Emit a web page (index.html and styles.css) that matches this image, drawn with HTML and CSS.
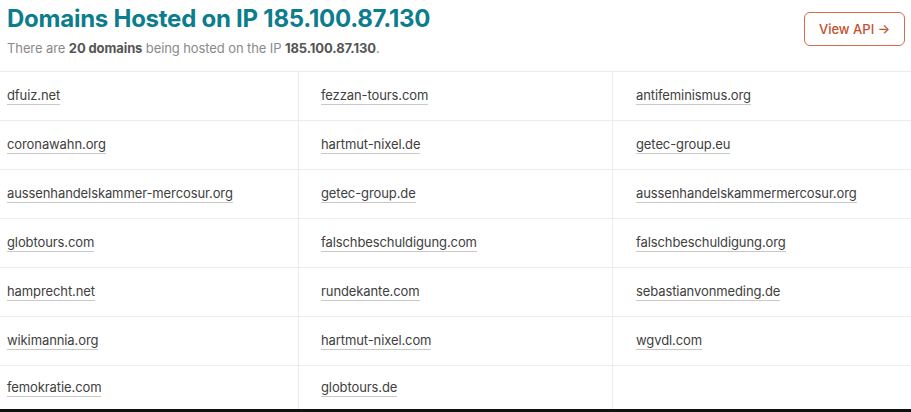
FILE: index.html
```html
<!DOCTYPE html>
<html>
<head>
<meta charset="utf-8">
<link rel="stylesheet" href="styles.css">
</head>
<body>
<div class="page">
  <header class="head">
    <div class="titles">
      <h1 class="title">Domains Hosted on IP 185.100.87.130</h1>
      <p class="sub">There are <b>20 domains</b> being hosted on the IP <b>185.100.87.130</b>.</p>
    </div>
    <a class="api" href="#">View API →</a>
  </header>
  <div class="grid">
    <div class="cell c1"><a href="#">dfuiz.net</a></div>
    <div class="cell c2"><a href="#">fezzan-tours.com</a></div>
    <div class="cell c3"><a href="#">antifeminismus.org</a></div>
    <div class="cell c1"><a href="#">coronawahn.org</a></div>
    <div class="cell c2"><a href="#">hartmut-nixel.de</a></div>
    <div class="cell c3"><a href="#">getec-group.eu</a></div>
    <div class="cell c1"><a href="#">aussenhandelskammer-mercosur.org</a></div>
    <div class="cell c2"><a href="#">getec-group.de</a></div>
    <div class="cell c3"><a href="#">aussenhandelskammermercosur.org</a></div>
    <div class="cell c1"><a href="#">globtours.com</a></div>
    <div class="cell c2"><a href="#">falschbeschuldigung.com</a></div>
    <div class="cell c3"><a href="#">falschbeschuldigung.org</a></div>
    <div class="cell c1"><a href="#">hamprecht.net</a></div>
    <div class="cell c2"><a href="#">rundekante.com</a></div>
    <div class="cell c3"><a href="#">sebastianvonmeding.de</a></div>
    <div class="cell c1"><a href="#">wikimannia.org</a></div>
    <div class="cell c2"><a href="#">hartmut-nixel.com</a></div>
    <div class="cell c3"><a href="#">wgvdl.com</a></div>
    <div class="cell c1 last"><a href="#">femokratie.com</a></div>
    <div class="cell c2 last"><a href="#">globtours.de</a></div>
    <div class="cell c3 last"></div>
  </div>
  <div class="bottombar"></div>
</div>
</body>
</html>
```
FILE: styles.css
```css
html, body {
  margin: 0;
  padding: 0;
  background: #fff;
}
body {
  font-family: Inter, "Noto Sans", sans-serif;
  width: 911px;
  height: 412px;
  overflow: hidden;
}
.page {
  display: flex;
  flex-direction: column;
}
.head {
  display: flex;
  justify-content: space-between;
  align-items: flex-start;
  padding: 0 6px 0 7px;
  height: 71px;
}
.title {
  margin: 4px 0 0 0;
  font-size: 24px;
  font-weight: 700;
  color: #0b7d8c;
  letter-spacing: -0.25px;
  line-height: 30px;
}
.sub {
  margin: 5px 0 0 0;
  font-size: 13px;
  color: #8a8a8a;
  letter-spacing: -0.1px;
  line-height: 18px;
}
.sub b {
  color: #555;
  font-weight: 700;
}
.api {
  margin-top: 12px;
  width: 99px;
  height: 32px;
  box-sizing: content-box;
  border: 1px solid #d8694a;
  border-radius: 6px;
  color: #c4512f;
  font-size: 13px;
  font-weight: 500;
  text-decoration: none;
  display: flex;
  align-items: center;
  justify-content: center;
}
.grid {
  display: grid;
  grid-template-columns: 299px 314px 1fr;
  border-top: 1px solid #ececec;
}
.cell {
  height: 48px;
  border-bottom: 1px solid #ececec;
  display: flex;
  align-items: center;
  font-size: 13px;
}
.cell.last {
  height: 43px;
  border-bottom: none;
}
.c1 {
  padding-left: 7px;
  border-right: 1px solid #ececec;
}
.c2 {
  padding-left: 22px;
  border-right: 1px solid #ececec;
}
.c3 {
  padding-left: 23px;
}
.cell a {
  color: #404040;
  text-decoration: none;
  border-bottom: 1px solid #c8c8c8;
  line-height: 16px;
  padding-bottom: 1px;
  letter-spacing: -0.1px;
}
.bottombar {
  height: 3px;
  background: #111;
}
```
